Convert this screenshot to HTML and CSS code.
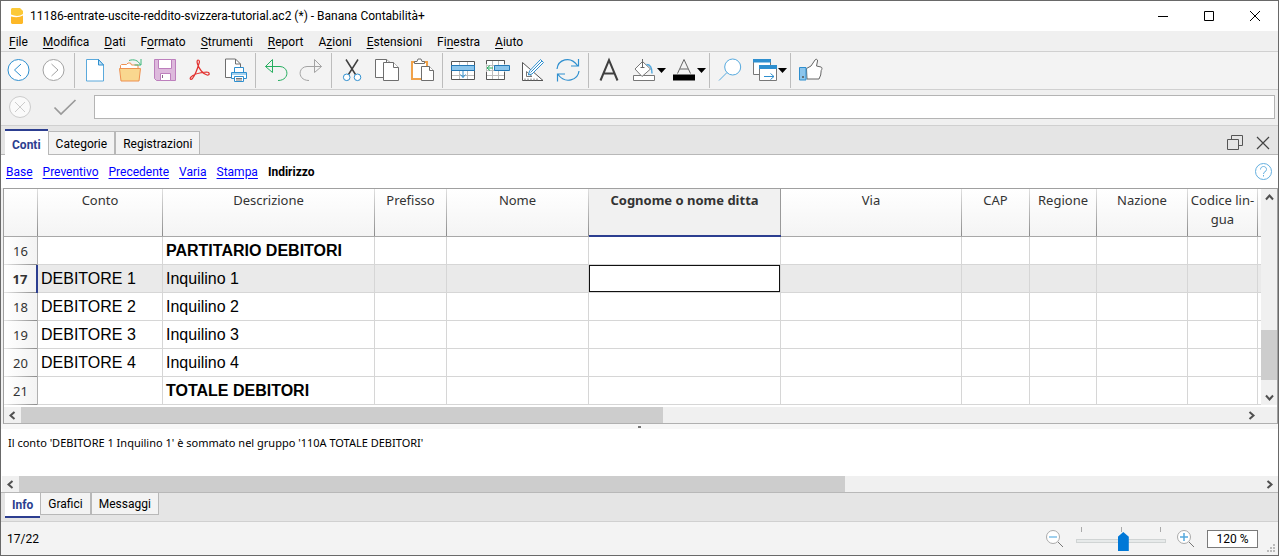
FILE: index.html
```html
<!DOCTYPE html>
<html lang="it">
<head>
<meta charset="utf-8">
<title>Banana Contabilità+</title>
<link rel="stylesheet" href="styles.css">
</head>
<body>
<div class="window">
  <header class="titlebar">
    <svg class="app-icon" width="12" height="16" viewBox="0 0 12 16"><path fill="#fcc937" d="M1 0h8l3 3v3Q7 9.500 0 6.500V1z"/><path fill="#fdb827" d="M0 8.500Q7 10.500 12 7.500V15l-1 1H1l-1-1z"/></svg>
    <h1 class="title">11186-entrate-uscite-reddito-svizzera-tutorial.ac2 (*) - Banana Contabilità+</h1>
    <button class="win-btn" aria-label="Riduci"><svg width="12" height="12" viewBox="0 0 12 12"><path stroke="#000" d="M1 6.500h10"/></svg></button>
    <button class="win-btn" aria-label="Ingrandisci"><svg width="12" height="12" viewBox="0 0 12 12"><path fill="none" stroke="#000" d="M1.500 1.500h9v9h-9z"/></svg></button>
    <button class="win-btn" aria-label="Chiudi"><svg width="12" height="12" viewBox="0 0 12 12"><path stroke="#000" d="M1 1l10 10M11 1L1 11"/></svg></button>
  </header>

  <nav class="menubar" aria-label="Menu">
    <button><u>F</u>ile</button><button><u>M</u>odifica</button><button><u>D</u>ati</button><button>F<u>o</u>rmato</button><button><u>S</u>trumenti</button><button><u>R</u>eport</button><button>A<u>z</u>ioni</button><button><u>E</u>stensioni</button><button>Fi<u>n</u>estra</button><button><u>A</u>iuto</button>
  </nav>

  <div class="toolbar" role="toolbar">
    <button class="tool" aria-label="Indietro"><svg viewBox="0 0 23 23"><g fill="none" stroke="#2e8fcf"><circle cx="11.500" cy="11" r="10.500" fill="#fff"/><path d="M14 5l-6.500 6L14 17"/></g></svg></button>
    <button class="tool" aria-label="Avanti"><svg viewBox="0 0 23 23"><g fill="none" stroke="#a3a3a3"><circle cx="11.500" cy="11" r="10.500" fill="#fff"/><path d="M9.500 5l6.500 6-6.500 6"/></g></svg></button>
    <span class="sep"></span>
    <button class="tool" aria-label="Nuovo"><svg viewBox="0 0 23 23"><path fill="#fff" stroke="#5aa9dc" d="M3.500.5h12l5 5.500v16h-17z"/><path fill="#bfe0f5" stroke="#2e8fcf" d="M15.500.5V6h5z"/></svg></button>
    <button class="tool" aria-label="Apri"><svg viewBox="0 0 23 23"><path fill="#fff" stroke="#ee9150" d="M2.500 10V6.500l1-1h5l1.500-1.500h2.500l1 2h6.500V10"/><path fill="#f9d78f" stroke="#ee9150" d="M1.500 9.500h21L21 22H3z"/><path fill="none" stroke="#3fb87c" d="M11 1.500c5-1.500 9-.5 11.500 4.500M16.500 6h6.500V0"/></svg></button>
    <button class="tool" aria-label="Salva"><svg viewBox="0 0 23 23"><path fill="#ddb9dc" stroke="#bd7fbd" d="M1.500.5h21v21h-19l-2-2z"/><path fill="#fff" stroke="#bd7fbd" d="M5.500.5h13v9h-13zM7.500 14.500h10v7h-10z"/><path stroke="#8b668b" d="M9.500 16v3"/></svg></button>
    <button class="tool" aria-label="Esporta PDF"><svg viewBox="0 0 23 23"><path fill="none" stroke="#e2302e" stroke-width="1.200" d="M10 1c2 0 1.500 2.500.8 4C9.500 9.500 7 16 4.500 19.500c-1.500 1.500-3 .5-2-1C5 15.500 12 13.500 18.500 13c3.500 0 3.500 3.500.5 3C15 15 11 10 9.500 5 8.800 2.500 9 1 10 1z"/></svg></button>
    <button class="tool" aria-label="Stampa"><svg viewBox="0 0 23 23"><path fill="#fff" stroke="#6e6e6e" d="M8.500 18.500h-6V0h10l5 5v4"/><path fill="none" stroke="#6e6e6e" d="M12.500 0v5h5"/><path fill="#fff" stroke="#2e8fcf" d="M11.500 13V8.500h9V13M8.500 13.500h15v6h-15z"/><path fill="#a5d2ee" d="M9 14h14v2H9z"/><path fill="#fff" stroke="#2e8fcf" d="M11.500 17.500h9v5h-9z"/><path stroke="#777" d="M13 19.500h6M13 21h6"/></svg></button>
    <span class="sep"></span>
    <button class="tool" aria-label="Annulla"><svg viewBox="0 0 23 23"><path fill="none" stroke="#27ae60" d="M8.500.5v13L1.500 7.500zM1.500 7.500H16c9.500.5 9.500 14-2 14"/></svg></button>
    <button class="tool" aria-label="Ripeti"><svg viewBox="0 0 23 23"><path fill="none" stroke="#a3a3a3" d="M15.500.5v13l7-6zM22.500 7.500H8c-9.500.5-9.500 14 2 14"/></svg></button>
    <span class="sep"></span>
    <button class="tool" aria-label="Taglia"><svg viewBox="0 0 23 23"><path stroke="#404040" stroke-width="1.500" d="M6 .5l9.500 15M18 .5l-9.500 15"/><g fill="#fff" stroke="#2e8fcf"><circle cx="6.700" cy="18.300" r="3.300"/><circle cx="17.500" cy="18.300" r="3.300"/></g></svg></button>
    <button class="tool" aria-label="Copia"><svg viewBox="0 0 23 23"><g fill="#fff" stroke="#6e6e6e"><path d="M.5.500h11l4.500 4v14H.5z"/><path d="M11.500.5v4h4"/><path d="M8.500 3.500h10l5 5v13h-15z"/><path d="M18.500 3.500v5h5"/></g></svg></button>
    <button class="tool" aria-label="Incolla"><svg viewBox="0 0 23 23"><path fill="#fff" stroke="#f0a24a" stroke-width="2" d="M2 3h15v17H2z"/><g fill="#fff" stroke="#6e6e6e"><path d="M4.500 4.500v-2H7l1-2.500h3l1 2.500h2.500v2z"/><path d="M11.500 7.500h8l4 4v10h-12z"/><path d="M19.500 7.500v4h4"/></g></svg></button>
    <span class="sep"></span>
    <button class="tool" aria-label="Inserisci righe"><svg viewBox="0 0 23 23"><path fill="#fff" stroke="#555" d="M.5 2.500h23v18H.5z"/><path stroke="#bdbdbd" d="M8.500 3v17M16.500 3v17M1 16.500h22"/><path fill="#8bc5ec" stroke="#2277b5" d="M.5 6.500h23v5H.5z"/><path fill="none" stroke="#2e8fcf" d="M12 12v6.500M9.500 15.500l2.500 3 2.500-3"/></svg></button>
    <button class="tool" aria-label="Inserisci celle"><svg viewBox="0 0 23 23"><path fill="#fff" stroke="#bdbdbd" d="M.5 1.500h18v19H.5zM.5 6.500h18M.5 11.500h18M.5 16.500h18M6.500 1v20M12.500 1v20"/><path fill="none" stroke="#555" d="M.5 5V1.500h18V5M.5 13v7.500h18V13"/><path fill="#8bc5ec" stroke="#2277b5" d="M8.500 6.500h15v5h-15z"/><path fill="none" stroke="#27ae60" d="M7 9H1m3-2.500L1 9l3 2.500"/></svg></button>
    <button class="tool" aria-label="Elabora"><svg viewBox="0 0 23 23"><path fill="#fff" stroke="#555" d="M1.500 3.500v18h20.500z"/><path fill="none" stroke="#777" d="M5.500 12.500v5h5.500zM4 19.500v2m3-2v2m3-2v2m3-2v2m3-2v2"/><path fill="#fff" stroke="#2e8fcf" d="M19.500.5l3 3L11 15l-3.500 1L8.500 12zM21 2L9.500 13.500"/></svg></button>
    <button class="tool" aria-label="Ricalcola"><svg viewBox="0 0 23 23"><path fill="none" stroke="#2e8fcf" stroke-width="1.200" d="M1 10C2 1 14-4 21.500 6.500M22.500 0v7H15M23 12c-1 9-13.500 13.500-21 3.500M1.500 22.500V15H9"/></svg></button>
    <span class="sep"></span>
    <button class="tool" aria-label="Carattere"><svg viewBox="0 0 23 23"><path fill="none" stroke="#404040" stroke-width="2" d="M3.500 21.500L12 1l8.500 20.500M6.500 14.500h11"/></svg></button>
    <button class="tool menu" aria-label="Colore di sfondo"><svg viewBox="0 0 23 23"><path fill="#fff" stroke="#777" d="M1.500 16.500h21v5h-21z"/><path fill="#fff" stroke="#777" d="M10.500 2.500l8 7.500-8.500 7.500L3 10z"/><path fill="none" stroke="#666" d="M10.500 0v8.500M8.500 8.500h4"/><path fill="none" stroke="#55a9de" stroke-width="1.500" d="M14.500 5.500q5.500 0 5.500 9"/></svg><svg class="caret" viewBox="0 0 9 5"><path d="M0 0h9L4.500 5z"/></svg></button>
    <button class="tool menu" aria-label="Colore del testo"><svg viewBox="0 0 23 23"><path fill="none" stroke="#666" d="M5.500 14.500L12 .5l6.500 14M8 10h8"/><path d="M1 15.500h22v6H1z"/></svg><svg class="caret" viewBox="0 0 9 5"><path d="M0 0h9L4.500 5z"/></svg></button>
    <span class="sep"></span>
    <button class="tool" aria-label="Cerca"><svg viewBox="0 0 23 23"><g stroke="#55a9de"><circle cx="14.700" cy="8" r="8" fill="#fff"/><path d="M9 13.500l-8 8"/></g></svg></button>
    <button class="tool menu" aria-label="Finestre"><svg viewBox="0 0 23 23"><g fill="#fff" stroke="#777"><path d="M.5.500h17v15H.5z"/><path d="M6.500 6.500h17v15h-17z"/></g><path fill="#2e8fcf" d="M0 0h18v3.500H0zM6 6h18v4H6z"/><path fill="none" stroke="#2e8fcf" d="M11 17.500h10M17.500 14.500l3.500 3-3.500 3"/></svg><svg class="caret" viewBox="0 0 9 5"><path d="M0 0h9L4.500 5z"/></svg></button>
    <span class="sep"></span>
    <button class="tool" aria-label="Consiglia"><svg viewBox="0 0 23 23"><path fill="#fff" stroke="#666" d="M7.500 9.500L12 7l4-6c1-1.500 3-.5 2.500 1L17.500 7l4.500 1c1.500.5 1 2.500.2 3.500l-.5 4.500L20 20H8z"/><path fill="#8bc5ec" stroke="#2e8fcf" d="M.5 8.500h6.500v12.500H.5z"/><circle cx="4" cy="18" r="1" fill="#555"/></svg></button>
  </div>

  <div class="editbar">
    <button class="edit-btn" aria-label="Annulla modifica"><svg width="22" height="22" viewBox="0 0 22 22"><g stroke="#ccc"><circle cx="11" cy="11" r="10.500" fill="#fafafa"/><path d="M6 6l10 10M16 6L6 16"/></g></svg></button>
    <button class="edit-btn" aria-label="Conferma"><svg width="22" height="22" viewBox="0 0 22 22"><path fill="none" stroke="#999" stroke-width="1.700" d="M.5 11.500l6.500 6.500L21.500 4"/></svg></button>
    <input class="edit-input" type="text" aria-label="Contenuto cella">
  </div>

  <div class="tabstrip">
    <button class="tab active">Conti</button><button class="tab">Categorie</button><button class="tab">Registrazioni</button>
    <div class="strip-tools">
      <button aria-label="Ripristina"><svg width="16" height="16" viewBox="0 0 16 16"><path fill="none" stroke="#555" d="M4.500 4V.5h11v10H12M.5 4.500h11v10H.5z"/></svg></button>
      <button aria-label="Chiudi scheda"><svg width="14" height="14" viewBox="0 0 14 14"><path stroke="#444" stroke-width="1.200" d="M1 1l12 12M13 1L1 13"/></svg></button>
    </div>
  </div>

  <nav class="views" aria-label="Viste">
    <a href="#">Base</a><a href="#">Preventivo</a><a href="#">Precedente</a><a href="#">Varia</a><a href="#">Stampa</a><strong>Indirizzo</strong>
    <button class="help" aria-label="Aiuto"><svg width="17" height="17" viewBox="0 0 17 17"><g fill="none" stroke="#64afe0"><circle cx="8.500" cy="8.500" r="8"/><path d="M5.500 6.500c0-4 6-4 6 0 0 2.300-3 2-3 4.500M8.500 12v1.500"/></g></svg></button>
  </nav>

  <main class="grid-frame">
    <div class="grid-top">
      <div class="grid-view">
        <table class="grid">
          <colgroup><col class="c-num"><col class="c-conto"><col class="c-desc"><col class="c-pref"><col class="c-nome"><col class="c-cogn"><col class="c-via"><col class="c-cap"><col class="c-reg"><col class="c-naz"><col class="c-ling"><col></colgroup>
          <thead><tr><th></th><th>Conto</th><th>Descrizione</th><th>Prefisso</th><th>Nome</th><th class="current">Cognome o nome ditta</th><th>Via</th><th>CAP</th><th>Regione</th><th>Nazione</th><th>Codice lin-<br>gua</th><th class="rest"></th></tr></thead>
          <tbody>
            <tr><th>16</th><td></td><td class="strong">PARTITARIO DEBITORI</td><td></td><td></td><td></td><td></td><td></td><td></td><td></td><td></td><td class="rest"></td></tr>
            <tr class="selected"><th>17</th><td>DEBITORE 1</td><td>Inquilino 1</td><td></td><td></td><td class="cursor"><div></div></td><td></td><td></td><td></td><td></td><td></td><td class="rest"></td></tr>
            <tr><th>18</th><td>DEBITORE 2</td><td>Inquilino 2</td><td></td><td></td><td></td><td></td><td></td><td></td><td></td><td></td><td class="rest"></td></tr>
            <tr><th>19</th><td>DEBITORE 3</td><td>Inquilino 3</td><td></td><td></td><td></td><td></td><td></td><td></td><td></td><td></td><td class="rest"></td></tr>
            <tr><th>20</th><td>DEBITORE 4</td><td>Inquilino 4</td><td></td><td></td><td></td><td></td><td></td><td></td><td></td><td></td><td class="rest"></td></tr>
            <tr><th>21</th><td></td><td class="strong">TOTALE DEBITORI</td><td></td><td></td><td></td><td></td><td></td><td></td><td></td><td></td><td class="rest"></td></tr>
          </tbody>
        </table>
      </div>
      <div class="scroll vertical">
        <button aria-label="Su"><svg width="9" height="9" viewBox="0 0 9 9"><path d="M1 6.500l3.500-4 3.500 4"/></svg></button>
        <div class="track"><span class="thumb"></span></div>
        <button aria-label="Giù"><svg width="9" height="9" viewBox="0 0 9 9"><path d="M1 2.500l3.500 4 3.500-4"/></svg></button>
      </div>
    </div>
    <div class="scroll horizontal grid-scroll">
      <button aria-label="Sinistra"><svg width="9" height="9" viewBox="0 0 9 9"><path d="M6.500 1l-4 3.500 4 3.500"/></svg></button>
      <div class="track"><span class="thumb"></span></div>
      <button aria-label="Destra"><svg width="9" height="9" viewBox="0 0 9 9"><path d="M2.500 1l4 3.500-4 3.500"/></svg></button>
    </div>
  </main>

  <div class="splitter"><span></span></div>

  <section class="info">
    <p>Il conto 'DEBITORE 1 Inquilino 1' è sommato nel gruppo '110A TOTALE DEBITORI'</p>
    <div class="scroll horizontal info-scroll">
      <button aria-label="Sinistra"><svg width="9" height="9" viewBox="0 0 9 9"><path d="M6.500 1l-4 3.500 4 3.500"/></svg></button>
      <div class="track"><span class="thumb"></span></div>
      <button aria-label="Destra"><svg width="9" height="9" viewBox="0 0 9 9"><path d="M2.500 1l4 3.500-4 3.500"/></svg></button>
    </div>
  </section>

  <div class="tabstrip bottom">
    <button class="tab active">Info</button><button class="tab">Grafici</button><button class="tab">Messaggi</button>
  </div>

  <footer class="status">
    <span class="position">17/22</span>
    <button class="zoom-btn" aria-label="Riduci zoom"><svg width="18" height="18" viewBox="0 0 18 18"><circle cx="7" cy="7" r="6.500" fill="#fff" stroke="#aaa"/><path stroke="#777" d="M12 12l5 5"/><path stroke="#7fc0e8" stroke-width="1.500" d="M3 7h8"/></svg></button>
    <div class="slider">
      <div class="ticks"><i></i><i></i><i></i></div>
      <input type="range" min="0" max="100" value="53" aria-label="Zoom">
    </div>
    <button class="zoom-btn" aria-label="Aumenta zoom"><svg width="18" height="18" viewBox="0 0 18 18"><circle cx="7" cy="7" r="6.500" fill="#fff" stroke="#aaa"/><path stroke="#777" d="M12 12l5 5"/><path stroke="#55a9de" stroke-width="1.500" d="M3 7h8M7 3v8"/></svg></button>
    <button class="zoom-value">120 %</button>
    <svg class="grip" width="8" height="8" viewBox="0 0 8 8"><path fill="#bbb" d="M6 0h2v2H6zM3 3h2v2H3zM6 3h2v2H6zM0 6h2v2H0zM3 6h2v2H3zM6 6h2v2H6z"/></svg>
  </footer>
</div>
</body>
</html>
```

FILE: styles.css
```css
* { box-sizing: border-box; }
body {
  margin: 0;
  font: 12px/16px Roboto, "Noto Sans", sans-serif;
  color: #000;
}
button {
  margin: 0;
  padding: 0;
  border: 0;
  background: none;
  color: inherit;
  font: inherit;
}
svg { display: block; flex: none; overflow: visible; }

.window {
  display: flex;
  flex-direction: column;
  min-height: 100vh;
  border: 1px solid #696969;
  background: #f0f0f0;
}

.titlebar { display: flex; align-items: center; height: 30px; padding-left: 10px; background: #fff; }
.title { flex: 1; margin: 0 0 0 7px; font-size: 12px; font-weight: 400; white-space: nowrap; }
.win-btn { display: grid; place-items: center; width: 46px; height: 30px; }

.menubar { display: flex; gap: 15px; padding: 3px 8px 1px; border-bottom: 1px solid #d0d0d0; }
.menubar u { text-underline-offset: 2px; }

.toolbar { display: flex; align-items: stretch; height: 38px; border-bottom: 1px solid #d0d0d0; background: #f3f3f3; }
.tool { display: flex; align-items: center; width: 35px; padding-left: 6px; }
.tool svg { width: 23px; height: 23px; }
.tool.menu { width: 40px; gap: 2px; }
.tool .caret { width: 9px; height: 5px; }
.sep { width: 6px; padding: 1px 0; }
.sep::before { content: ""; display: block; width: 1px; height: 100%; margin-left: 3px; background: #bdbdbd; }

.editbar { display: flex; align-items: center; height: 36px; padding: 0 3px 2px 8px; border-bottom: 1px solid #d0d0d0; }
.edit-btn { width: 22px; margin-right: 23px; }
.edit-btn + .edit-btn { margin-right: 18px; }
.edit-input { flex: 1; height: 24px; border: 1px solid #b4b4b4; background: #fff; font: inherit; outline: 0; }

.tabstrip { display: flex; align-items: flex-end; height: 29px; padding-left: 4px; border-bottom: 1px solid #b8b8b8; background: #e5e5e5; }
.tab { height: 23px; padding: 1px 7px 0; border: 1px solid #b8b8b8; border-bottom: 0; background: #f3f3f3; }
.tab.active { height: 26px; margin-bottom: -1px; padding: 3px 7px 0; border: 0; border-top: 2px solid #2c3e90; background: #fff; color: #2c3e90; font-weight: 700; }
.strip-tools { display: flex; align-items: center; gap: 13px; height: 22px; margin-left: auto; padding-right: 8px; }

.views { display: flex; align-items: center; gap: 10px; height: 33px; padding: 0 6px 0 5px; background: #fff; }
.views a { color: #00f; text-underline-offset: 2px; }
.help { margin-left: auto; }

.grid-frame { margin-left: 2px; border: 1px solid #a0a0a0; border-bottom-color: #b0b0b0; background: #fff; }
.grid-top { display: flex; }
.grid-view { flex: 1; min-width: 0; overflow: hidden; }
.grid { width: 100%; table-layout: fixed; border-collapse: separate; border-spacing: 0; }
.c-num { width: 34px; }
.c-conto { width: 125px; }
.c-desc { width: 212px; }
.c-pref { width: 72px; }
.c-nome { width: 142px; }
.c-cogn { width: 192px; }
.c-via { width: 181px; }
.c-cap { width: 68px; }
.c-reg { width: 67px; }
.c-naz { width: 91px; }
.c-ling { width: 70px; }
.grid th { padding: 0; color: #333; font: 400 13px/19px "Noto Sans", "Open Sans", sans-serif; }
.grid thead th {
  height: 48px;
  padding: 2px 1px 0 0;
  border-bottom: 1px solid #a8a8a8;
  background:
    linear-gradient(#e0e0e0, #8c8c8c) right / 1px 100% no-repeat,
    linear-gradient(#fff, #f4f4f4);
  vertical-align: top;
  white-space: nowrap;
}
.grid thead th.current {
  border-bottom: 2px solid #2c3e90;
  background: linear-gradient(#999, #999) right / 1px 100% no-repeat, #f1f1f1;
  font-weight: 700;
}
.grid tbody th {
  border-right: 1px solid #b0b0b0;
  background:
    linear-gradient(90deg, #e6e6e6, #8c8c8c) bottom / 100% 1px no-repeat,
    linear-gradient(90deg, #fff, #f3f3f3);
}
.grid td { height: 28px; padding: 0 3px; border-right: 1px solid #d6d6d6; border-bottom: 1px solid #d6d6d6; font: 16px/20px "Liberation Sans", Arial, sans-serif; white-space: nowrap; }
.grid .strong { font-weight: 700; }
.grid .rest { padding: 0; border-right: 0; }
.grid thead .rest { background: linear-gradient(#fff, #f4f4f4); }
.grid .selected td { background: #eaeaea; }
.grid .selected th { border-right: 2px solid #2c3e90; font-weight: 700; }
.grid .selected td.cursor { padding: 0; background: #fff; }
.cursor div { height: 27px; border: 1px solid #111; }

.scroll { display: flex; background: #f0f0f0; }
.scroll button { display: grid; place-items: center; flex: none; width: 17px; height: 16px; }
.scroll path { fill: none; stroke: #505050; stroke-width: 2; }
.track { display: flex; flex: 1; }
.thumb { display: block; background: #cdcdcd; }
.vertical { flex-direction: column; width: 16px; }
.vertical button { width: 16px; }
.vertical .track { flex-direction: column; }
.vertical .track::before { content: ""; flex: 0 0 68%; }
.vertical .thumb { flex: 0 0 27%; }
.grid-scroll { margin-top: 2px; padding-right: 17px; }
.grid-scroll .thumb { width: 52.5%; }
.info-scroll .thumb { width: 66.5%; }

.splitter { display: grid; place-items: center; height: 5px; background: #f7f7f7; }
.splitter span { width: 3px; height: 2px; background: #777; }

.info { display: flex; flex: 1; flex-direction: column; padding-left: 1px; background: #fff; }
.info p { flex: 1; margin: 0; padding: 6px; font: 11px/16px "Noto Sans", "Open Sans", sans-serif; }

.bottom { align-items: flex-start; height: 30px; border-top: 1px solid #b8b8b8; border-bottom-color: #d0d0d0; }
.bottom .tab { height: 22px; padding-top: 0; border: 1px solid #b8b8b8; border-top: 0; }
.bottom .tab.active { height: 25px; margin: 0; padding: 0 7px; border: 0; border-bottom: 2px solid #2c3e90; }

.status { display: flex; align-items: center; height: 33px; padding: 0 3px 0 6px; background: #f3f3f3; }
.position { margin-right: auto; }
.zoom-btn { width: 18px; }
.slider { width: 90px; margin: 0 11px 0 12px; }
.ticks { display: flex; justify-content: space-between; padding: 0 5px; }
.ticks i { width: 1px; height: 5px; background: #aaa; }
.slider input { display: block; width: 100%; height: 19px; margin: 0; appearance: none; background: none; }
.slider input::-webkit-slider-runnable-track { height: 4px; border: 1px solid #d0d4d4; background: #e7eaea; }
.slider input::-webkit-slider-thumb { width: 11px; height: 19px; margin-top: -8px; appearance: none; background: #0078d7; clip-path: polygon(50% 0, 100% 25%, 100% 100%, 0 100%, 0 25%); }
.zoom-value { width: 51px; height: 18px; margin-left: 12px; border: 1px solid #7a7a7a; background: #fff; }
.grip { align-self: flex-end; margin: 0 0 3px 9px; }
```
